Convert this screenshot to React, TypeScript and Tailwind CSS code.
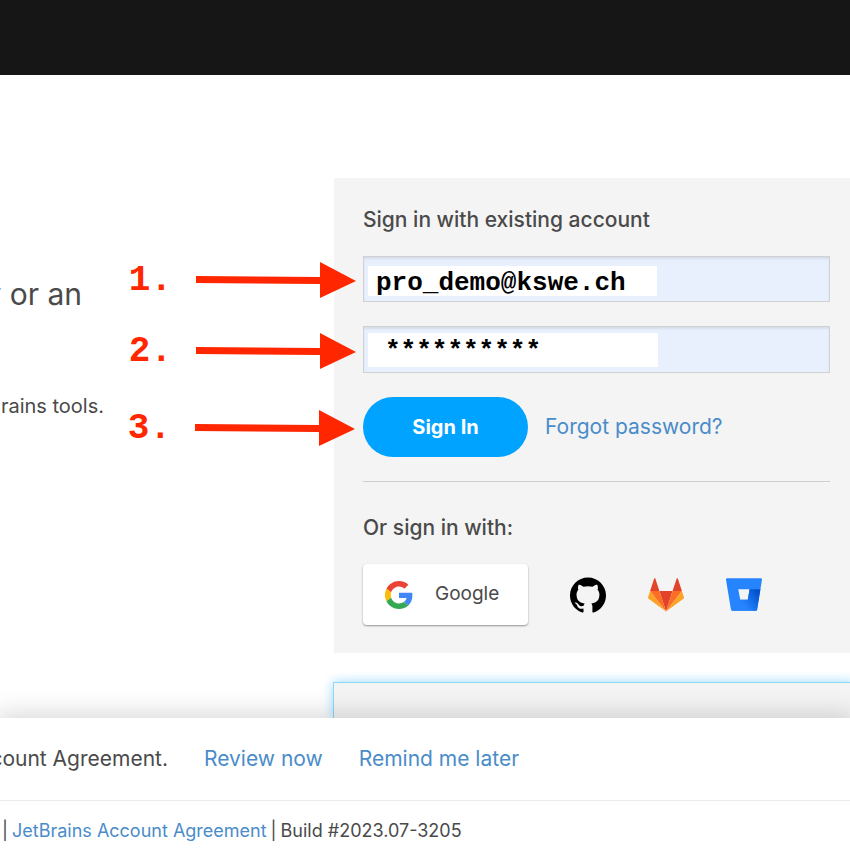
import { SiGithub } from "react-icons/si";

function GoogleIcon() {
  return (
    <svg viewBox="0 0 48 48" className="size-7" aria-hidden="true">
      <path fill="#EA4335" d="M24 9.5c3.54 0 6.71 1.22 9.21 3.6l6.85-6.85C35.9 2.38 30.47 0 24 0 14.62 0 6.51 5.38 2.56 13.22l7.98 6.19C12.43 13.72 17.74 9.5 24 9.5z" />
      <path fill="#4285F4" d="M46.98 24.55c0-1.57-.15-3.09-.38-4.55H24v9.02h12.94c-.58 2.96-2.26 5.48-4.78 7.18l7.73 6c4.51-4.18 7.09-10.36 7.09-17.65z" />
      <path fill="#FBBC05" d="M10.53 28.59c-.48-1.45-.76-2.99-.76-4.59s.27-3.14.76-4.59l-7.98-6.19C.92 16.46 0 20.12 0 24c0 3.88.92 7.54 2.56 10.78l7.97-6.19z" />
      <path fill="#34A853" d="M24 48c6.48 0 11.93-2.13 15.89-5.81l-7.73-6c-2.15 1.45-4.92 2.3-8.16 2.3-6.26 0-11.57-4.22-13.47-9.91l-7.98 6.19C6.51 42.62 14.62 48 24 48z" />
    </svg>
  );
}

function GitLabIcon() {
  return (
    <svg viewBox="0 0 36 34" className="h-[34px] w-9" aria-hidden="true">
      <path fill="#E24329" d="M18 33.5 24.6 13H11.4z" />
      <path fill="#FC6D26" d="M18 33.5 11.4 13H2.1zM18 33.5 24.6 13h9.3z" />
      <path fill="#FCA326" d="M2.1 13 .1 19.2c-.2.6 0 1.2.5 1.5L18 33.5zM33.9 13l2 6.2c.2.6 0 1.2-.5 1.5L18 33.5z" />
      <path fill="#E24329" d="M2.1 13h9.3L7.4.8c-.2-.6-1.1-.6-1.3 0zM33.9 13h-9.3L28.6.8c.2-.6 1.1-.6 1.3 0z" />
    </svg>
  );
}

function BitbucketIcon() {
  return (
    <svg viewBox="0 6.2 62.42 56.3" className="h-[33px] w-9" aria-hidden="true">
      <defs>
        <linearGradient id="bucket" x1="64.01" y1="30.27" x2="32.99" y2="54.48" gradientUnits="userSpaceOnUse">
          <stop offset="0.18" stopColor="#0052cc" />
          <stop offset="1" stopColor="#2684ff" />
        </linearGradient>
      </defs>
      <path fill="#2684ff" d="M2 6.26A2 2 0 0 0 0 8.58l8.49 51.54a2.72 2.72 0 0 0 2.66 2.27h40.73a2 2 0 0 0 2-1.68l8.49-52.12a2 2 0 0 0-2-2.32zM37.75 43.51h-13l-3.52-18.39h19.65z" />
      <path fill="url(#bucket)" d="M59.67 25.12H40.88l-3.15 18.39h-13L9.4 61.73a2.71 2.71 0 0 0 1.75.66h40.74a2 2 0 0 0 2-1.68z" />
    </svg>
  );
}

function Step({ label }: { label: string }) {
  return (
    <div className="pointer-events-none absolute inset-y-0 right-full mr-2 flex items-center gap-6 pt-[2px] text-[#ff2600]">
      <span className="pt-[2px] font-['Liberation_Mono',monospace] text-4xl font-bold">{label}</span>
      <svg viewBox="0 0 160 36" className="h-9 w-40" fill="currentColor" aria-hidden="true">
        <path d="M0 14 124 15V0L160 19 124 36V22L0 21z" />
      </svg>
    </div>
  );
}

const field =
  "flex border border-[#d1d1d1] bg-[#e8f0fe] px-1 shadow-[inset_0_2px_2px_rgba(0,0,0,0.08)]";
const fieldText =
  "bg-white pt-1 font-['Liberation_Mono',monospace] text-[26px] font-bold text-black outline-none";

export default function App() {
  return (
    <div className="flex min-h-screen flex-col overflow-hidden bg-white font-['Inter',sans-serif] text-[#4a4a4a]">
      <header className="h-[75px] shrink-0 bg-[#161616]" />

      <main className="flex pt-[103px]">
        <section className="min-w-0 flex-1 pt-24">
          <h1 className="flex w-[82px] justify-end overflow-hidden text-3xl leading-10 font-normal whitespace-nowrap">
            y or an
          </h1>
          <p className="mt-[78px] flex w-26 justify-end overflow-hidden text-xl leading-7 whitespace-nowrap">
            rains tools.
          </p>
        </section>

        <div className="w-[516px] shrink-0">
          <section className="bg-[#f4f4f4] pt-7 pr-5 pb-7 pl-[29px]">
            <h2 className="text-[21px] leading-7 font-medium">Sign in with existing account</h2>
            <form className="mt-[22px]" onSubmit={(e) => e.preventDefault()}>
              <div className={`relative h-[46px] items-end pb-[5px] ${field}`}>
                <Step label="1." />
                <input
                  aria-label="Email"
                  type="text"
                  defaultValue="pro_demo@kswe.ch"
                  className={`h-[30px] w-[289px] pl-2 ${fieldText}`}
                />
              </div>
              <div className={`relative mt-6 h-[47px] items-center ${field}`}>
                <Step label="2." />
                <input
                  aria-label="Password"
                  type="text"
                  defaultValue="**********"
                  className={`h-[34px] w-[290px] pl-[17px] ${fieldText}`}
                />
              </div>
              <div className="relative mt-6 flex items-center">
                <Step label="3." />
                <button type="submit" className="h-15 w-[165px] rounded-full bg-[#00a3ff] text-xl font-bold text-white">
                  Sign In
                </button>
                <a href="#forgot" className="ml-[17px] text-[21px] text-[#4a8cc9]">
                  Forgot password?
                </a>
              </div>
            </form>

            <hr className="mt-6 border-[#cfcfcf]" />

            <h2 className="mt-8 text-[21px] leading-7 font-medium">Or sign in with:</h2>
            <div className="mt-[22px] flex items-center">
              <button
                type="button"
                className="flex h-[61px] w-[165px] items-center rounded-sm bg-white pl-[22px] text-[19px] shadow-[0_1px_2px_rgba(0,0,0,0.4)]"
              >
                <GoogleIcon />
                <span className="ml-[22px]">Google</span>
              </button>
              <div className="ml-[42px] flex items-center gap-[42px]">
                <button type="button" aria-label="GitHub">
                  <SiGithub className="size-9 text-black" />
                </button>
                <button type="button" aria-label="GitLab">
                  <GitLabIcon />
                </button>
                <button type="button" aria-label="Bitbucket">
                  <BitbucketIcon />
                </button>
              </div>
            </div>
          </section>
          <section className="mt-[29px] -mr-1 -ml-px h-9 border border-b-0 border-[#8ed8ff] bg-[#f4f4f4] shadow-[0_0_12px_rgba(0,163,255,0.4)]" />
        </div>
      </main>

      <aside className="relative flex h-[83px] items-center border-b border-[#ebebeb] bg-white text-[21px] shadow-[0_0_24px_4px_rgba(0,0,0,0.16)]">
        <p className="flex w-42 justify-end overflow-hidden whitespace-nowrap">count Agreement.</p>
        <a href="#review" className="ml-9 text-[#4a8cc9]">
          Review now
        </a>
        <a href="#later" className="ml-9 text-[#4a8cc9]">
          Remind me later
        </a>
      </aside>

      <footer className="relative flex flex-1 items-center gap-1 bg-white pt-[10px] pl-[2px] text-lg">
        <span>|</span>
        <a href="#agreement" className="text-[#4a8cc9]">
          JetBrains Account Agreement
        </a>
        <span>|</span>
        <span>Build #2023.07-3205</span>
      </footer>
    </div>
  );
}
